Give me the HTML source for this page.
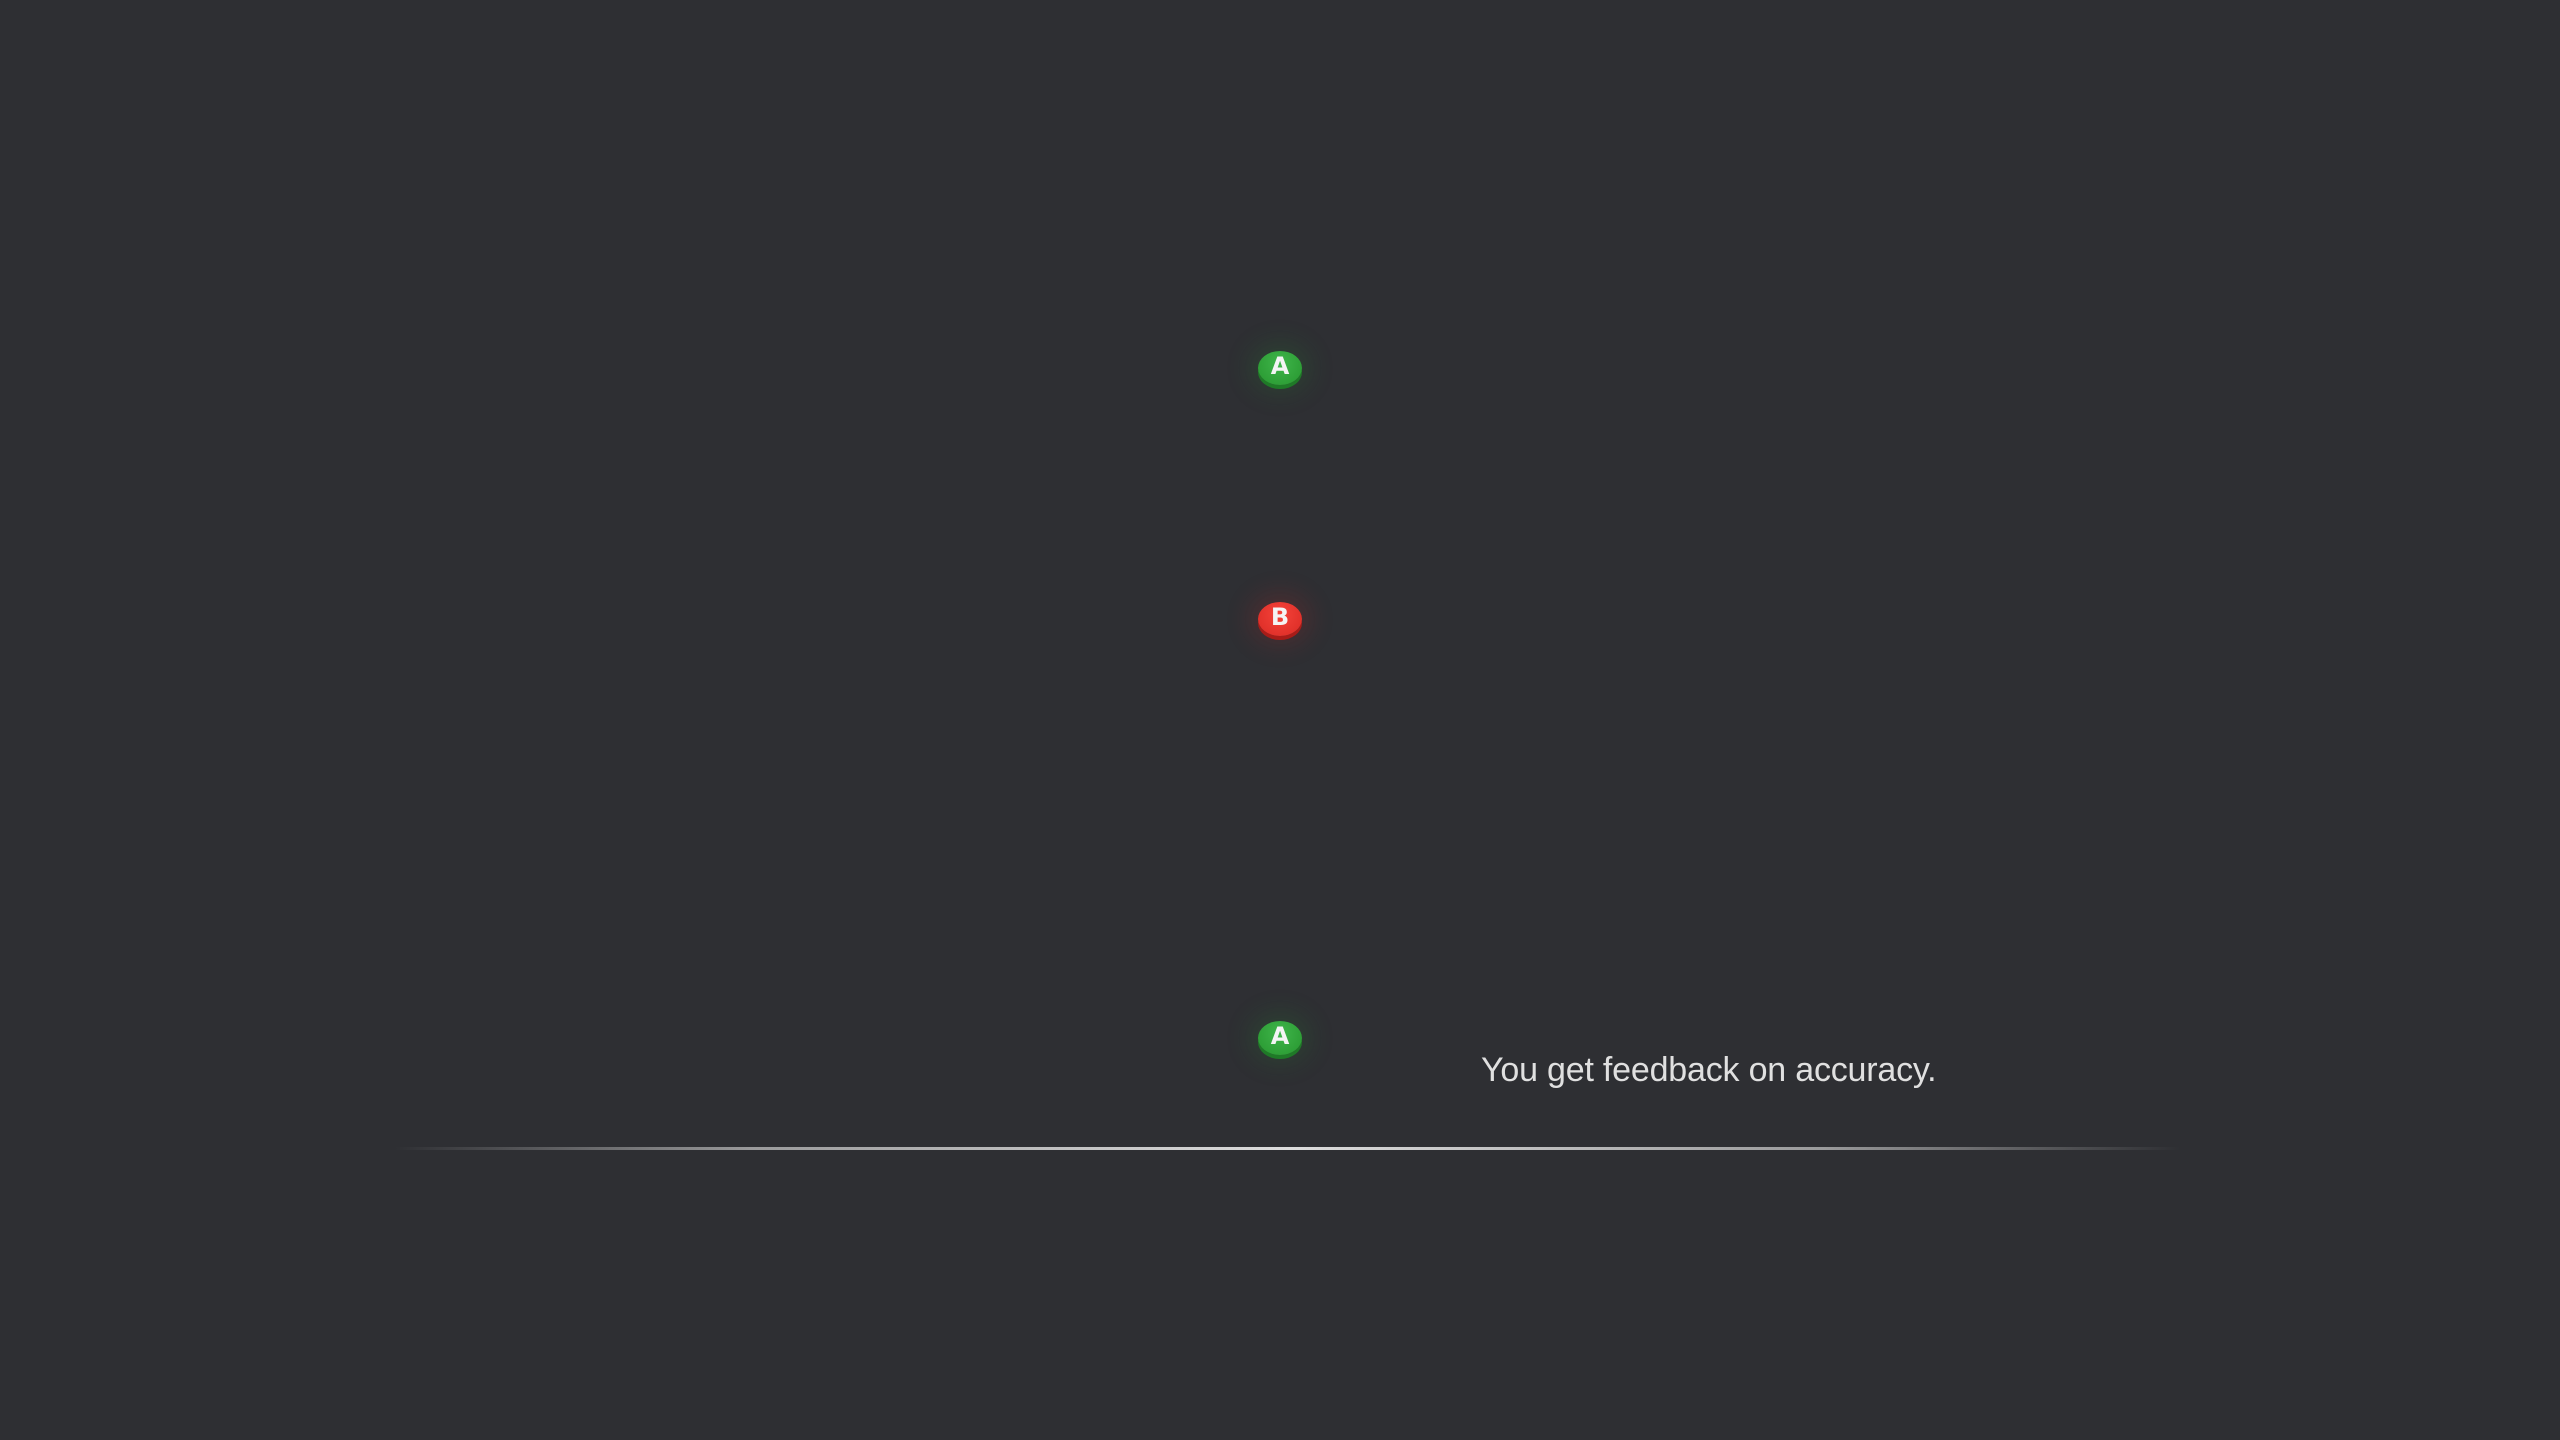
<!DOCTYPE html>
<html><head><style>
html,body{margin:0;padding:0;width:2560px;height:1440px;background:#2e2f33;overflow:hidden}
.b{position:absolute;width:44px;height:34px;border-radius:50%;font:bold 24px "DejaVu Sans",sans-serif;color:#f4f4f4;text-align:center;line-height:30px}
.g{background:radial-gradient(ellipse at 50% 35%,#3fb54a,#27962f);box-shadow:0 4px 0 #1f7a27,0 0 26px 8px rgba(40,150,50,.18)}
.r{background:radial-gradient(ellipse at 50% 35%,#f5433a,#d92a24);box-shadow:0 4px 0 #a81c18,0 0 26px 8px rgba(220,40,40,.18)}
.t{position:absolute;left:1481px;top:1051px;font:34px "Liberation Sans",sans-serif;color:#e0e0e0;letter-spacing:-0.2px}
.l{position:absolute;left:395px;top:1147px;width:1785px;height:3px;background:linear-gradient(90deg,rgba(200,200,200,0),rgba(200,200,200,.7) 20%,#ddd 50%,rgba(200,200,200,.7) 80%,rgba(200,200,200,0))}
</style></head><body>
<div class="b g" style="left:1258px;top:351px">A</div>
<div class="b r" style="left:1258px;top:602px">B</div>
<div class="b g" style="left:1258px;top:1021px">A</div>
<div class="t">You get feedback on accuracy.</div>
<div class="l"></div>
</body></html>
